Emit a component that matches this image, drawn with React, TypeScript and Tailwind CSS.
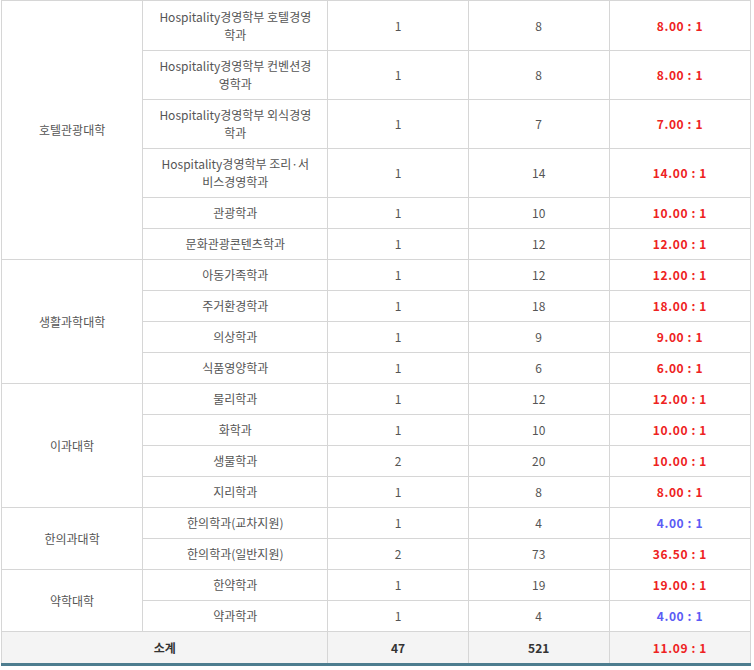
const groups: [string, [string, string, string, string, boolean?][]][] = [
  ["호텔관광대학", [
    ["Hospitality경영학부 호텔경영\n학과", "1", "8", "8.00 : 1"],
    ["Hospitality경영학부 컨벤션경\n영학과", "1", "8", "8.00 : 1"],
    ["Hospitality경영학부 외식경영\n학과", "1", "7", "7.00 : 1"],
    ["Hospitality경영학부 조리·서\n비스경영학과", "1", "14", "14.00 : 1"],
    ["관광학과", "1", "10", "10.00 : 1"],
    ["문화관광콘텐츠학과", "1", "12", "12.00 : 1"],
  ]],
  ["생활과학대학", [
    ["아동가족학과", "1", "12", "12.00 : 1"],
    ["주거환경학과", "1", "18", "18.00 : 1"],
    ["의상학과", "1", "9", "9.00 : 1"],
    ["식품영양학과", "1", "6", "6.00 : 1"],
  ]],
  ["이과대학", [
    ["물리학과", "1", "12", "12.00 : 1"],
    ["화학과", "1", "10", "10.00 : 1"],
    ["생물학과", "2", "20", "10.00 : 1"],
    ["지리학과", "1", "8", "8.00 : 1"],
  ]],
  ["한의과대학", [
    ["한의학과(교차지원)", "1", "4", "4.00 : 1", true],
    ["한의학과(일반지원)", "2", "73", "36.50 : 1"],
  ]],
  ["약학대학", [
    ["한약학과", "1", "19", "19.00 : 1"],
    ["약과학과", "1", "4", "4.00 : 1", true],
  ]],
];

const td = "border border-[#d6d6d6] text-center align-middle";

export default function App() {
  return (
    <div className="w-[754px] h-[670px] bg-white" style={{ fontFamily: '"Noto Sans CJK KR", "Liberation Sans", sans-serif' }}>
      <table className="border-collapse w-[750px] ml-[1px] text-[12px] text-[#555] border-b-[3px] border-b-[#4d7d8f]">
        <colgroup>
          <col className="w-[141px]" />
          <col className="w-[185px]" />
          <col className="w-[140px]" />
          <col className="w-[141px]" />
          <col className="w-[141px]" />
        </colgroup>
        <tbody>
          {groups.map(([g, rows]) =>
            rows.map((r, i) => (
              <tr key={g + i} className={r[0].includes("\n") ? (g === "호텔관광대학" && i === 0 ? "h-[50px]" : "h-[49px]") : "h-[31px]"}>
                {i === 0 && <td rowSpan={rows.length} className={td}>{g}</td>}
                <td className={td + " leading-[18px] whitespace-pre-line"}>{r[0]}</td>
                <td className={td}>{r[1]}</td>
                <td className={td}>{r[2]}</td>
                <td className={td + " font-bold tracking-[0.6px] whitespace-pre " + (r[4] ? "text-[#5b5bf5]" : "text-[#ee2222]")}>{r[3]}</td>
              </tr>
            ))
          )}
          <tr className="h-[33px] bg-[#f4f4f4] font-bold text-[#333]">
            <td colSpan={2} className={td}>소계</td>
            <td className={td}>47</td>
            <td className={td}>521</td>
            <td className={td + " text-[#ee2222] tracking-[0.6px]"}>11.09 : 1</td>
          </tr>
        </tbody>
      </table>
    </div>
  );
}
